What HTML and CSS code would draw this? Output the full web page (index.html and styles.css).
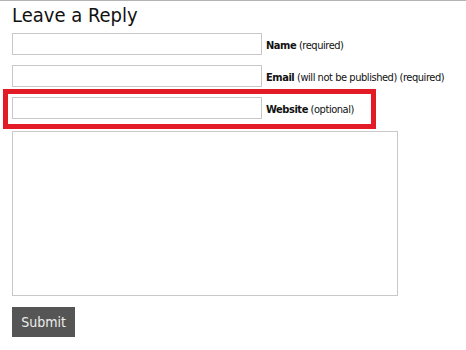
FILE: index.html
```html
<!DOCTYPE html>
<html lang="en">
<head>
    <meta charset="UTF-8">
    <title>Leave a Reply</title>
    <link rel="stylesheet" href="styles.css">
</head>
<body>
    <div class="respond">
        <h3 class="reply-title">Leave a Reply</h3>

        <form class="comment-form">
            <p class="field">
                <input type="text" class="text-input">
                <label><strong>Name</strong> (required)</label>
            </p>
            <p class="field">
                <input type="text" class="text-input">
                <label><strong>Email</strong> (will not be published) (required)</label>
            </p>
            <!-- Campo destacado -->
            <p class="field highlight">
                <input type="text" class="text-input">
                <label><strong>Website</strong> (optional)</label>
            </p>
            <textarea class="comment-box"></textarea>
            <div>
                <button type="submit" class="submit">Submit</button>
            </div>
        </form>
    </div>
</body>
</html>
```

FILE: styles.css
```css
body {
    margin: 0;
    background-color: #ffffff;
    color: #111111;
    font-family: 'DejaVu Sans Condensed', 'DejaVu Sans', sans-serif;
    font-stretch: condensed;
}

.respond {
    border-top: 1px solid #b4b4b4;
    padding: 0 12px;
}

.reply-title {
    font-size: 20px;
    font-weight: normal;
    line-height: 26px;
    margin: 1px 0 5px;
}

.comment-form {
    display: flex;
    flex-direction: column;
    gap: 10px;
}

.field {
    display: flex;
    align-items: center;
    margin: 0;
    font-size: 11px;
    letter-spacing: -0.45px;
    white-space: nowrap;
}

.field label {
    padding-top: 2px;
}

.text-input {
    flex: none;
    box-sizing: border-box;
    width: 250px;
    height: 22px;
    margin: 0 4px 0 0;
    border: 1px solid #c8c8c8;
    background-color: #ffffff;
}

/* Caixa vermelha em volta do campo Website */
.highlight {
    width: 373px;
    box-sizing: border-box;
    border: 5px solid #e21b26;
    padding: 3px 0 5px 4px;
    margin: -8px 0 -8px -9px;
}

.comment-box {
    box-sizing: border-box;
    width: 386px;
    height: 165px;
    margin: 0;
    border: 1px solid #c8c8c8;
    resize: none;
}

.submit {
    margin-top: 1px;
    width: 63px;
    height: 30px;
    padding: 0;
    border: none;
    background-color: #555555;
    color: #eeeeee;
    font-family: 'DejaVu Sans Condensed', 'DejaVu Sans', sans-serif;
    font-stretch: condensed;
    font-size: 14px;
    cursor: pointer;
}
```
